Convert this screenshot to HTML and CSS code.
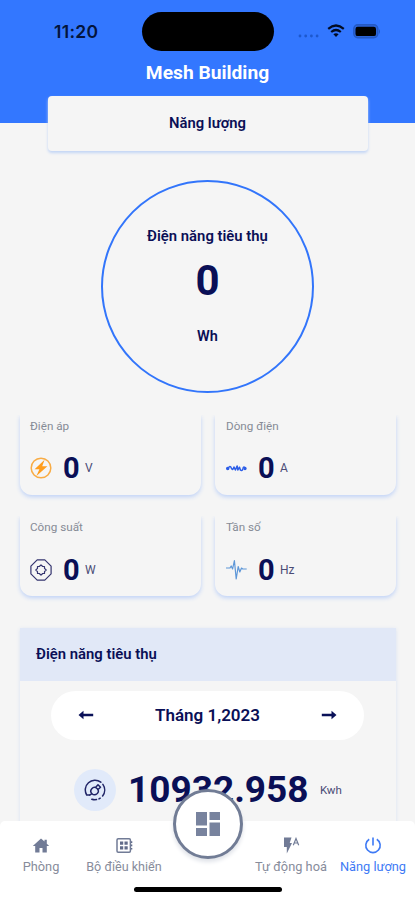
FILE: index.html
```html
<!DOCTYPE html>
<html lang="vi">
<head>
<meta charset="utf-8">
<meta name="viewport" content="width=device-width, initial-scale=1">
<title>Mesh Building</title>
<link rel="stylesheet" href="styles.css">
</head>
<body>
<div class="app">
  <header class="header">
    <div class="status">
      <span class="time">11:20</span>
      <span class="island"></span>
      <span class="indicators">
        <svg class="dots" width="22" height="4" viewBox="0 0 22 4" fill="#1d58cd"><circle cx="2" cy="2" r="1.4"/><circle cx="7.7" cy="2" r="1.4"/><circle cx="13.4" cy="2" r="1.4"/><circle cx="19.1" cy="2" r="1.4"/></svg>
        <svg class="wifi" width="18" height="14" viewBox="0 0 18 14" fill="none" stroke="#020b22" stroke-width="2.2"><path d="M1.2 4.8Q9-1.8 16.8 4.8M4.2 8Q9 4 13.8 8"/><path d="M6.4 10.2Q9 8.2 11.6 10.2L9 13Z" fill="#020b22" stroke="none"/></svg>
        <svg class="battery" width="28" height="15" viewBox="0 0 28 15"><rect x=".8" y=".8" width="24" height="13" rx="4" fill="#2c65d9" stroke="#2459c4" stroke-width="1.4"/><rect x="2.5" y="2.7" width="20.5" height="9.4" rx="2.2" fill="#000"/><path d="M26 5q2 2.400 0 5z" fill="#2459c4"/></svg>
      </span>
    </div>
    <h1 class="title">Mesh Building</h1>
    <div class="tab">Năng lượng</div>
  </header>

  <main class="content">
    <section class="gauge">
      <span class="gauge-label">Điện năng tiêu thụ</span>
      <strong class="gauge-value">0</strong>
      <span class="gauge-unit">Wh</span>
    </section>

    <section class="stats">
      <article class="stat">
        <span class="stat-label">Điện áp</span>
        <div class="stat-row">
          <svg width="22" height="22" viewBox="0 0 22 22"><circle cx="11" cy="11" r="9.8" fill="none" stroke="#f8ac45" stroke-width="1.5"/><path d="M14.600 2.800L4.600 12.200h4.800l-3 6.800 11-9.800h-5.200z" fill="#ff9d1c"/></svg>
          <strong>0</strong><small>V</small>
        </div>
      </article>
      <article class="stat">
        <span class="stat-label indent">Dòng điện</span>
        <div class="stat-row">
          <svg width="22" height="22" viewBox="0 0 22 22" fill="none" stroke="#2d5ee8" stroke-width="1.500" stroke-linecap="round" stroke-linejoin="round"><path d="M3 11.600Q5 7.500 6.500 11.400q1.300 2.500 2.500-1.400l1.400 3 1.700-4 .8 4 1.600-2.800 1 3q1.700 1 2.300-1.200Q18.600 8.300 20.500 11.600"/><circle cx="2.700" cy="11.500" r="1" fill="#2d5ee8"/><circle cx="20" cy="11.500" r=".9" fill="#2d5ee8"/></svg>
          <strong>0</strong><small>A</small>
        </div>
      </article>
      <article class="stat lower">
        <span class="stat-label">Công suất</span>
        <div class="stat-row">
          <svg width="22" height="22" viewBox="0 0 22 22" fill="none" stroke="#34346f" stroke-width="1.200" stroke-linejoin="round"><path d="M7.200.9h7.600l6.300 6.300v7.600l-6.300 6.300H7.200L.9 14.800V7.200z"/><path d="M11 5.800l1.700 1.700h1.800v1.800l1.700 1.700-1.700 1.700v1.800h-1.800L11 16.200l-1.700-1.700H7.500v-1.800L5.800 11l1.700-1.700V7.500h1.800z"/></svg>
          <strong>0</strong><small>W</small>
        </div>
      </article>
      <article class="stat lower">
        <span class="stat-label indent">Tần số</span>
        <div class="stat-row">
          <svg width="22" height="22" viewBox="0 0 22 22" fill="none" stroke="#5e97d8" stroke-width="1.200" stroke-linejoin="round"><path d="M1 9h4l1.200-2 1.400 3L9.400 1.500 11.200 20l2-12.500 1.600 5.500 1.700-4 1.200 1h4"/></svg>
          <strong>0</strong><small>Hz</small>
        </div>
      </article>
    </section>

    <section class="usage">
      <h2 class="usage-head"><span>Điện năng tiêu thụ</span></h2>
      <div class="month">
        <svg width="16" height="10" viewBox="0 0 16 10" fill="#0a1158"><path d="M5.500.8L.5 5l5 4.200V6.200h9.700V3.800H5.500z"/></svg>
        <span>Tháng 1,2023</span>
        <svg width="16" height="10" viewBox="0 0 16 10" fill="#0a1158"><path d="M10.500.8l5 4.200-5 4.200V6.200H.8V3.800h9.700z"/></svg>
      </div>
      <div class="total">
        <span class="total-icon">
          <svg width="22" height="22" viewBox="0 0 22 22" fill="none" stroke="#202466" stroke-width="1.500" stroke-linecap="round" stroke-linejoin="round"><path d="M5.800 16H2.700A9.700 9.700 0 0 1 16.800 3.200M18.900 5.400A9.700 9.700 0 0 1 18.600 17M16.200 19.200l-1.200.7M12.500 20.600A9.700 9.700 0 0 1 7.800 20.200"/><path d="M7.800 9.800Q10.300 7 13 9.500T13.300 14.500Q10.500 17 8 14.700T7.800 9.800zM7.500 14.800l-1.700 1.200M11.500 8.500l2.500-2.700 2.500 2.500-2.700 2.500"/></svg>
        </span>
        <strong>10932.958</strong><small>Kwh</small>
      </div>
    </section>
  </main>

  <nav class="nav">
    <a class="item"><svg width="18" height="17" viewBox="0 0 18 17" fill="#717b96"><path d="M9 1.500L.8 9h2.400v6.500h4.300V11h3v4.500h4.300V9h2.400L14.800 6.700V2.800h-2.300v1.800z"/></svg><span>Phòng</span></a>
    <a class="item panel"><svg width="17" height="17" viewBox="0 0 17 17"><rect x="1" y="1.800" width="13.400" height="13.400" rx="1.200" fill="none" stroke="#717b96" stroke-width="1.500"/><path d="M4 4.600h3.200v3.200H4zM8.500 4.600h3.200v3.200H8.500zM4 9.200h3.200v3.200H4zM8.500 9.200h3.200v3.200H8.500zM15 4.300h1.300v1.600H15zM15 7.600h1.300v1.600H15zM15 10.900h1.300v1.600H15z" fill="#626c8a"/></svg><span>Bộ điều khiển</span></a>
    <a class="fab"><svg width="26" height="26" viewBox="0 0 26 26" fill="#78839e"><path d="M1 1h11v13.500H1zM14.500 1H25v8H14.500zM1 17h11v8H1zM14.500 11.500H25V25H14.500z"/></svg></a>
    <a class="item"><svg width="17" height="17" viewBox="0 0 17 17" fill="#717b96"><path d="M1 .5h7.500L6.700 6H9l-5.200 10.500V10H1z"/><path d="M10.300 8.200L13 1.500l2.700 6.700M11.300 6h3.500" fill="none" stroke="#717b96" stroke-width="1.200"/></svg><span>Tự động hoá</span></a>
    <a class="item active"><svg width="18" height="17" viewBox="0 0 18 17" fill="none" stroke="#3e7af5" stroke-width="1.600"><path d="M5.200 2.300a7.200 7.200 0 1 0 7.600 0M9 .5v8"/></svg><span>Năng lượng</span></a>
    <span class="home-bar"></span>
  </nav>
</div>
</body>
</html>
```
FILE: styles.css
```css
* { box-sizing: border-box; margin: 0; padding: 0; }
body {
  width: 415px; height: 900px; overflow: hidden;
  background: #f5f5f5; color: #0a0f56;
  font-family: Roboto, "Noto Sans", sans-serif;
}
svg { display: block; flex: none; }
.app { display: flex; flex-direction: column; height: 900px; }

.header {
  height: 123px; flex: none; background: #3377ff;
  display: flex; flex-direction: column; align-items: center;
}
.status {
  width: 100%; height: 63px; flex: none; padding-top: 12px;
  display: grid; grid-template-columns: 142px 132px 1fr; align-items: start;
}
.time {
  padding: 9px 0 0 54px;
  font: 600 17.500px/22px Inter, sans-serif; letter-spacing: .3px; color: #03143c;
}
.island { height: 39px; border-radius: 20px; background: #000; }
.indicators { display: flex; padding: 11px 0 0 24px; }
.dots { margin: 11px 7px 0 0; }
.wifi { margin: 1px 8px 0 0; }
.battery { margin-top: 1px; }
.title { font-size: 19.200px; line-height: 20px; font-weight: 700; color: #fff; }
.tab {
  width: 320px; height: 55px; flex: none; margin-top: 13px;
  display: flex; align-items: center; justify-content: center; padding-bottom: 1px;
  background: #f5f5f5; border-radius: 4px; box-shadow: 0 2px 3px #c2d5f5;
  font-size: 14.800px; font-weight: 600;
}

.content { flex: 1; min-height: 0; overflow: hidden; padding: 57px 18px 0 20px; }
.gauge {
  width: 213px; height: 213px; margin: 0 0 0 81px;
  border: 2px solid #3275fb; border-radius: 50%;
  display: flex; flex-direction: column; align-items: center;
}
.gauge-label { margin-top: 44px; font-size: 14.850px; line-height: 20px; font-weight: 600; }
.gauge-value { margin-top: 11px; font-size: 42px; line-height: 48px; font-weight: 700; }
.gauge-unit { margin-top: 22px; font-size: 14.500px; line-height: 20px; font-weight: 600; }

.stats {
  display: grid; grid-template-columns: 181px 181px; column-gap: 14px; row-gap: 21px;
  margin-top: 22px;
}
.stat {
  height: 80px; padding: 0 10px; border-radius: 0 0 12px 12px; background: #f5f5f5;
  box-shadow: 0 2px 4px #bfd2f7; clip-path: inset(0 -8px -10px -8px);
}
.stat-label { display: block; padding-top: 3px; font-size: 11.700px; line-height: 16px; color: #868b95; }
.indent { padding-left: 1px; }
.stat-row { display: flex; align-items: center; height: 34px; margin-top: 17px; }
.lower .stat-row { margin-top: 18px; }
.stat-row strong { width: 16px; margin-left: 11px; font-size: 29px; line-height: 34px; font-weight: 700; }
.stat-row small { margin-left: 6px; font-size: 12px; line-height: 16px; color: #4a4c75; }

.usage {
  width: 376px; height: 260px; margin-top: 32px;
  background: #f5f5f5; box-shadow: 0 1px 4px #d7e1f3;
}
.usage-head {
  height: 53px; padding: 0 16px 2px; display: flex; align-items: center;
  background: #e1e8f7; font-size: 14.850px; font-weight: 600;
}
.month {
  width: 313px; height: 49px; margin: 10px 0 0 31px; padding: 0 27px 1px;
  display: flex; align-items: center; justify-content: space-between;
  background: #fff; border-radius: 25px; font-size: 17px; font-weight: 600;
}
.total { display: flex; align-items: center; height: 48px; margin: 26px 0 0 54px; }
.total-icon {
  width: 42px; height: 42px; border-radius: 50%; background: #e1eafa;
  display: flex; align-items: center; justify-content: center;
}
.total strong { width: 180px; margin-left: 12px; font-size: 37px; line-height: 44px; font-weight: 700; }
.total small { margin-left: 12px; font-size: 11.500px; color: #4a4c75; }

.nav {
  position: relative; height: 79px; flex: none;
  display: grid; grid-template-columns: 82px 84px 85px 80px 84px; align-items: start;
  background: #fff; border-radius: 5px 5px 0 0;
}
.item {
  display: flex; flex-direction: column; align-items: center; padding-top: 16px;
  font-size: 12.800px; color: #878c9b; white-space: nowrap;
}
.item svg { height: 17px; }
.item span { margin-top: 4px; line-height: 18px; }
.panel { font-size: 12.600px; }
.active { color: #3e7af5; }
.fab {
  width: 70px; height: 70px; margin: -32px 0 0 7px; border-radius: 50%;
  display: flex; align-items: center; justify-content: center;
  background: #fff; border: 3px solid #717c95; box-shadow: 0 3px 4px #dfe2e8;
}
.home-bar {
  position: absolute; left: 134px; bottom: 8px; width: 148px; height: 5px;
  border-radius: 3px; background: #000;
}
```
